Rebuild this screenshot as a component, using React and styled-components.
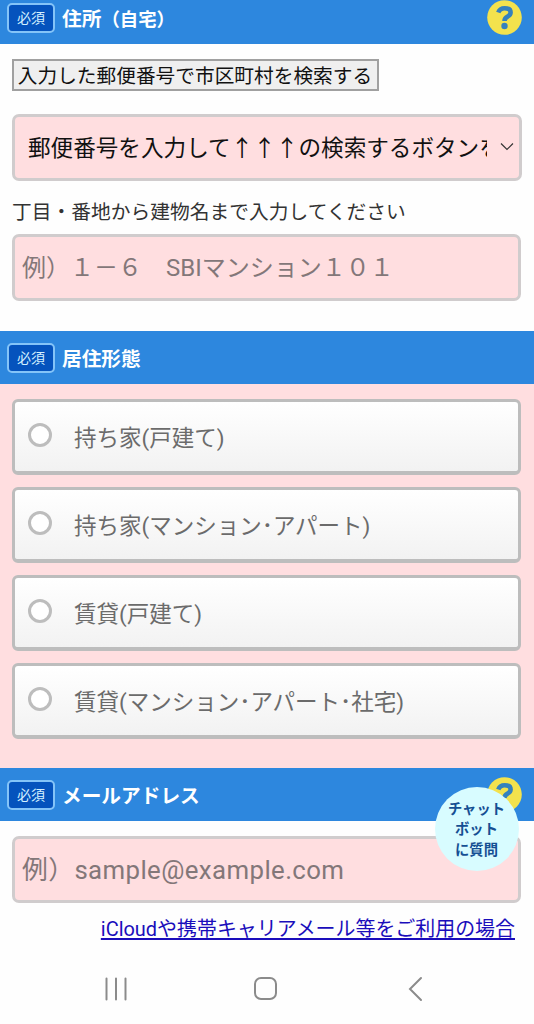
import React from "react";
import styled, { createGlobalStyle } from "styled-components";

const Global = createGlobalStyle`
  * { box-sizing: border-box; }
  body {
    margin: 0;
    background: #fefefe;
    font-family: Roboto, "Noto Sans CJK JP", sans-serif;
    color: #333;
  }
`;

const Page = styled.main`
  width: 534px;
  height: 1024px;
  overflow: hidden;
  display: flex;
  flex-direction: column;
`;

const Bar = styled.header`
  flex: none;
  display: flex;
  align-items: center;
  height: ${(p) => (p.$cut ? 44 : 53)}px;
  padding: 0 12px ${(p) => (p.$cut ? 9 : 0)}px 7px;
  background: #2d87de;
`;

const Badge = styled.span`
  display: flex;
  align-items: center;
  justify-content: center;
  width: 48px;
  height: 30px;
  padding-bottom: 1px;
  border: 2px solid #84c4f8;
  border-radius: 5px;
  background: #0553bd;
  color: #d4f0ff;
  font-size: 14px;
`;

const Title = styled.h2`
  flex: 1;
  margin: 0 0 0 7px;
  color: #fff;
  font-size: 19.7px;
  line-height: 30px;
  font-weight: 700;
  font-family: "Noto Sans CJK JP", sans-serif;
`;

const TitleNote = styled.span`
  font-size: 18.4px;
`;

const HelpIcon = styled.svg`
  display: block;
  width: 35px;
  height: 35px;
`;

const Section = styled.section`
  flex: none;
  display: flex;
  flex-direction: column;
  align-items: flex-start;
  height: ${(p) => p.$h}px;
  padding: 15px 13px 0 12px;
  background: ${(p) => (p.$pink ? "#ffdee0" : "#fefefe")};
`;

const SearchButton = styled.button`
  width: 367px;
  height: 32px;
  padding: 0 1px 0 0;
  border: 2px solid #a0a0a0;
  border-radius: 0;
  background: #efefef;
  color: #111;
  font-family: "Noto Sans CJK JP", sans-serif;
  font-size: 19.7px;
  line-height: 28px;
  white-space: nowrap;
`;

const Select = styled.div`
  display: flex;
  align-items: center;
  width: 510px;
  height: 67px;
  margin-top: 23px;
  padding: 0 5px 2px 13px;
  border: 3px solid #d0cccd;
  border-radius: 7px;
  background: #ffdee0;
  color: #111;
  font-family: "Noto Sans CJK JP", sans-serif;
  font-size: 22.6px;
`;

const SelectValue = styled.span`
  width: 460px;
  overflow: hidden;
  white-space: nowrap;
`;

const Chevron = styled.svg`
  width: 14px;
  height: 9px;
  margin-left: 13px;
`;

const Note = styled.label`
  margin: 15px 0 8px;
  font-size: 19.75px;
  line-height: 30px;
  font-family: "Noto Sans CJK JP", sans-serif;
`;

const Input = styled.input`
  width: 509px;
  height: 67px;
  padding: 0 7px;
  border: 3px solid #d0cccd;
  border-radius: 7px;
  outline: 0;
  background: #ffdee0;
  font-family: Roboto, "Noto Sans CJK JP", sans-serif;
  font-size: ${(p) => p.$size}px;
  letter-spacing: ${(p) => p.$spacing || 0}px;
  &::placeholder { color: #837779; opacity: 1; }
`;

const Options = styled.div`
  display: grid;
  gap: 11.9px;
  width: 509px;
`;

const Option = styled.label`
  display: flex;
  align-items: center;
  height: 76px;
  padding: 0 0 1px 13px;
  border: 3px solid #bdbdbd;
  border-bottom-width: 4px;
  border-radius: 6px;
  background: linear-gradient(#fff, #f2f2f2);
  color: #6b6b6b;
  font-size: 22.5px;
`;

const Radio = styled.span`
  width: 24px;
  height: 24px;
  margin: 0 22px 2px 0;
  border: 3px solid #bdbdbd;
  border-radius: 50%;
  background: #fff;
`;

const MailLink = styled.a`
  align-self: flex-end;
  margin: 11px 6px 0 0;
  color: #1a0dbb;
  font-size: 19.95px;
  line-height: 30px;
  text-decoration: underline;
  text-decoration-thickness: 2px;
  text-decoration-skip-ink: none;
  text-underline-offset: 2px;
`;

const ChatBubble = styled.button`
  position: absolute;
  left: 435px;
  top: 787px;
  width: 84px;
  height: 84px;
  padding: 0 1px 1px 0;
  border: 0;
  border-radius: 50%;
  background: #d8fcff;
  color: #154f93;
  font-family: "Noto Sans CJK JP", sans-serif;
  font-size: 14.3px;
  font-weight: 700;
  line-height: 20.3px;
`;

const NavBar = styled.nav`
  display: flex;
  gap: 124px;
  padding: 25px 0 0 103px;
  height: 74px;
`;

const NavIcon = styled.svg`
  flex: none;
  width: ${(p) => p.$w}px;
  height: 26px;
  fill: none;
  stroke: #8b8b8b;
  stroke-width: 2;
  stroke-linecap: round;
`;

const Help = () => (
  <HelpIcon viewBox="0 0 35 35">
    <circle cx="17.5" cy="17.5" r="17.3" fill="#f3e24d" />
    <path d="M11.3 12.6Q12.8 8.2 17.7 8.2Q23.6 8.2 23.6 12.4Q23.6 14.8 20.6 16.6Q17.5 18.2 17.5 21" fill="none" stroke="#3581bd" strokeWidth="4.6" />
    <circle cx="17.5" cy="26" r="3.2" fill="#3581bd" />
  </HelpIcon>
);

const SectionBar = ({ title, note, help, cut }) => (
  <Bar $cut={cut}>
    <Badge>必須</Badge>
    <Title>
      {title}
      {note && <TitleNote>{note}</TitleNote>}
    </Title>
    {help && <Help />}
  </Bar>
);

const housing = [
  "持ち家(戸建て)",
  "持ち家(マンション･アパート)",
  "賃貸(戸建て)",
  "賃貸(マンション･アパート･社宅)",
];

export default function App() {
  return (
    <Page lang="ja">
      <Global />
      <SectionBar title="住所" note="（自宅）" help cut />
      <Section $h={287}>
        <SearchButton>入力した郵便番号で市区町村を検索する</SearchButton>
        <Select>
          <SelectValue>郵便番号を入力して↑↑↑の検索するボタンを</SelectValue>
          <Chevron viewBox="0 0 14 9">
            <path d="M1 1.5L7 7.5L13 1.5" fill="none" stroke="#333" strokeWidth="1.2" />
          </Chevron>
        </Select>
        <Note htmlFor="street">丁目・番地から建物名まで入力してください</Note>
        <Input id="street" $size={24} placeholder="例）１－６　SBIマンション１０１" />
      </Section>
      <SectionBar title="居住形態" />
      <Section $h={384} $pink>
        <Options>
          {housing.map((name) => (
            <Option key={name}>
              <Radio />
              {name}
            </Option>
          ))}
        </Options>
      </Section>
      <SectionBar title="メールアドレス" help />
      <Section $h={130}>
        <Input $size={25.8} $spacing={0.4} placeholder="例）sample@example.com" />
        <MailLink href="#mail">iCloudや携帯キャリアメール等をご利用の場合</MailLink>
      </Section>
      <NavBar>
        <NavIcon $w={26} viewBox="0 0 26 26">
          <path d="M3.5 2.5V23.5M13 2.5V23.5M22.5 2.5V23.5" />
        </NavIcon>
        <NavIcon $w={26} viewBox="0 0 26 26">
          <rect x="2" y="2" width="21" height="21" rx="6" />
        </NavIcon>
        <NavIcon $w={26} viewBox="-4 0 26 26">
          <path d="M14 2L3 13L14 24" />
        </NavIcon>
      </NavBar>
      <ChatBubble>
        チャット
        <br />
        ボット
        <br />
        に質問
      </ChatBubble>
    </Page>
  );
}
